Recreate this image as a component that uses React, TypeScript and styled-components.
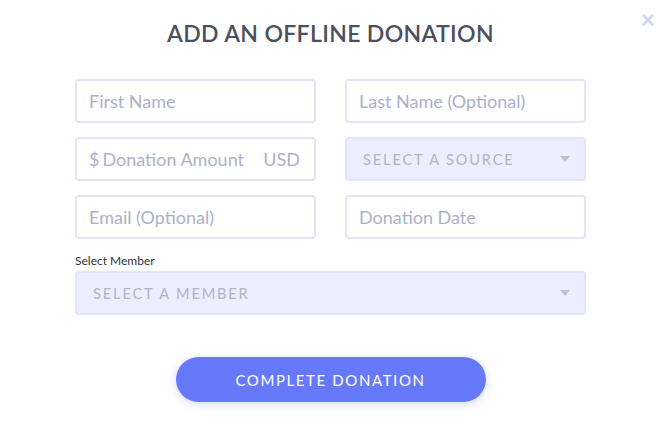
import React from 'react';
import styled, { createGlobalStyle } from 'styled-components';

const GlobalStyle = createGlobalStyle`
  html, body {
    margin: 0;
    padding: 0;
    background: #ffffff;
    font-family: Lato, "Open Sans", sans-serif;
  }
`;

const Modal = styled.div`
  position: relative;
  width: 672px;
  height: 426px;
  box-sizing: border-box;
  padding: 19px 0 0 75px;
`;

const Content = styled.div`
  width: 511px;
  display: flex;
  flex-direction: column;
`;

const Title = styled.h1`
  margin: 0;
  font-size: 23px;
  line-height: 28px;
  font-weight: 600;
  letter-spacing: 0.35px;
  color: #4b4f5f;
  text-align: center;
`;

const Close = styled.button`
  position: absolute;
  top: 13px;
  right: 17px;
  width: 14px;
  height: 14px;
  padding: 0;
  border: none;
  background: none;
  cursor: pointer;
`;

const Grid = styled.div`
  margin-top: 32px;
  display: grid;
  grid-template-columns: 241px 241px;
  column-gap: 29px;
  row-gap: 14px;
`;

const Field = styled.div`
  height: 44px;
  box-sizing: border-box;
  display: flex;
  align-items: center;
  padding: 0 11px 0 12px;
  border: 2px solid #e2e6f8;
  border-radius: 4px;
  background: #fff;
`;

const Input = styled.input`
  flex: 1;
  min-width: 0;
  border: none;
  outline: none;
  background: transparent;
  padding: 0;
  font-family: Lato, sans-serif;
  font-size: 18px;
  color: #4b4f5f;

  &::placeholder {
    color: #adb1c8;
  }
`;

const Affix = styled.span<{ $size?: number }>`
  font-size: ${p => p.$size ?? 18}px;
  color: #adb1c8;
  margin-right: 3px;
`;

const Select = styled.div`
  height: 44px;
  box-sizing: border-box;
  display: flex;
  align-items: center;
  justify-content: space-between;
  padding: 0 14px 0 16px;
  border: 2px solid #e2e6f8;
  border-radius: 4px;
  background: #eceefd;
  font-size: 14.5px;
  letter-spacing: 1.9px;
  text-transform: uppercase;
  color: #b0b3ca;
  cursor: pointer;
`;

const Caret = styled.span`
  width: 0;
  height: 0;
  border-left: 5.5px solid transparent;
  border-right: 5.5px solid transparent;
  border-top: 6px solid #bcc0d8;
`;

const Label = styled.label`
  margin-top: 15px;
  margin-bottom: 3px;
  font-size: 12px;
  line-height: 14px;
  color: #333338;
`;

const Button = styled.button`
  align-self: center;
  margin-top: 42px;
  width: 310px;
  height: 45px;
  border: none;
  border-radius: 23px;
  background: #6779fb;
  box-shadow: 0 2px 8px rgba(103, 121, 251, 0.3);
  color: #ffffff;
  font-family: Lato, sans-serif;
  font-size: 15px;
  letter-spacing: 1.6px;
  text-transform: uppercase;
  cursor: pointer;
`;

const App = () => (
  <>
    <GlobalStyle />
    <Modal>
      <Close aria-label="Close">
        <svg width="14" height="14" viewBox="0 0 14 14">
          <path d="M2.5 2.5 L11.5 11.5 M11.5 2.5 L2.5 11.5" stroke="#d3daf5" strokeWidth="3" strokeLinecap="round" />
        </svg>
      </Close>
      <Content>
        <Title>ADD AN OFFLINE DONATION</Title>
        <Grid>
          <Field>
            <Input placeholder="First Name" />
          </Field>
          <Field>
            <Input placeholder="Last Name (Optional)" />
          </Field>
          <Field>
            <Affix $size={18}>$</Affix>
            <Input placeholder="Donation Amount" />
            <Affix>USD</Affix>
          </Field>
          <Select>
            Select a Source
            <Caret />
          </Select>
          <Field>
            <Input placeholder="Email (Optional)" />
          </Field>
          <Field>
            <Input placeholder="Donation Date" />
          </Field>
        </Grid>
        <Label>Select Member</Label>
        <Select>
          Select a Member
          <Caret />
        </Select>
        <Button>Complete Donation</Button>
      </Content>
    </Modal>
  </>
);

export default App;
